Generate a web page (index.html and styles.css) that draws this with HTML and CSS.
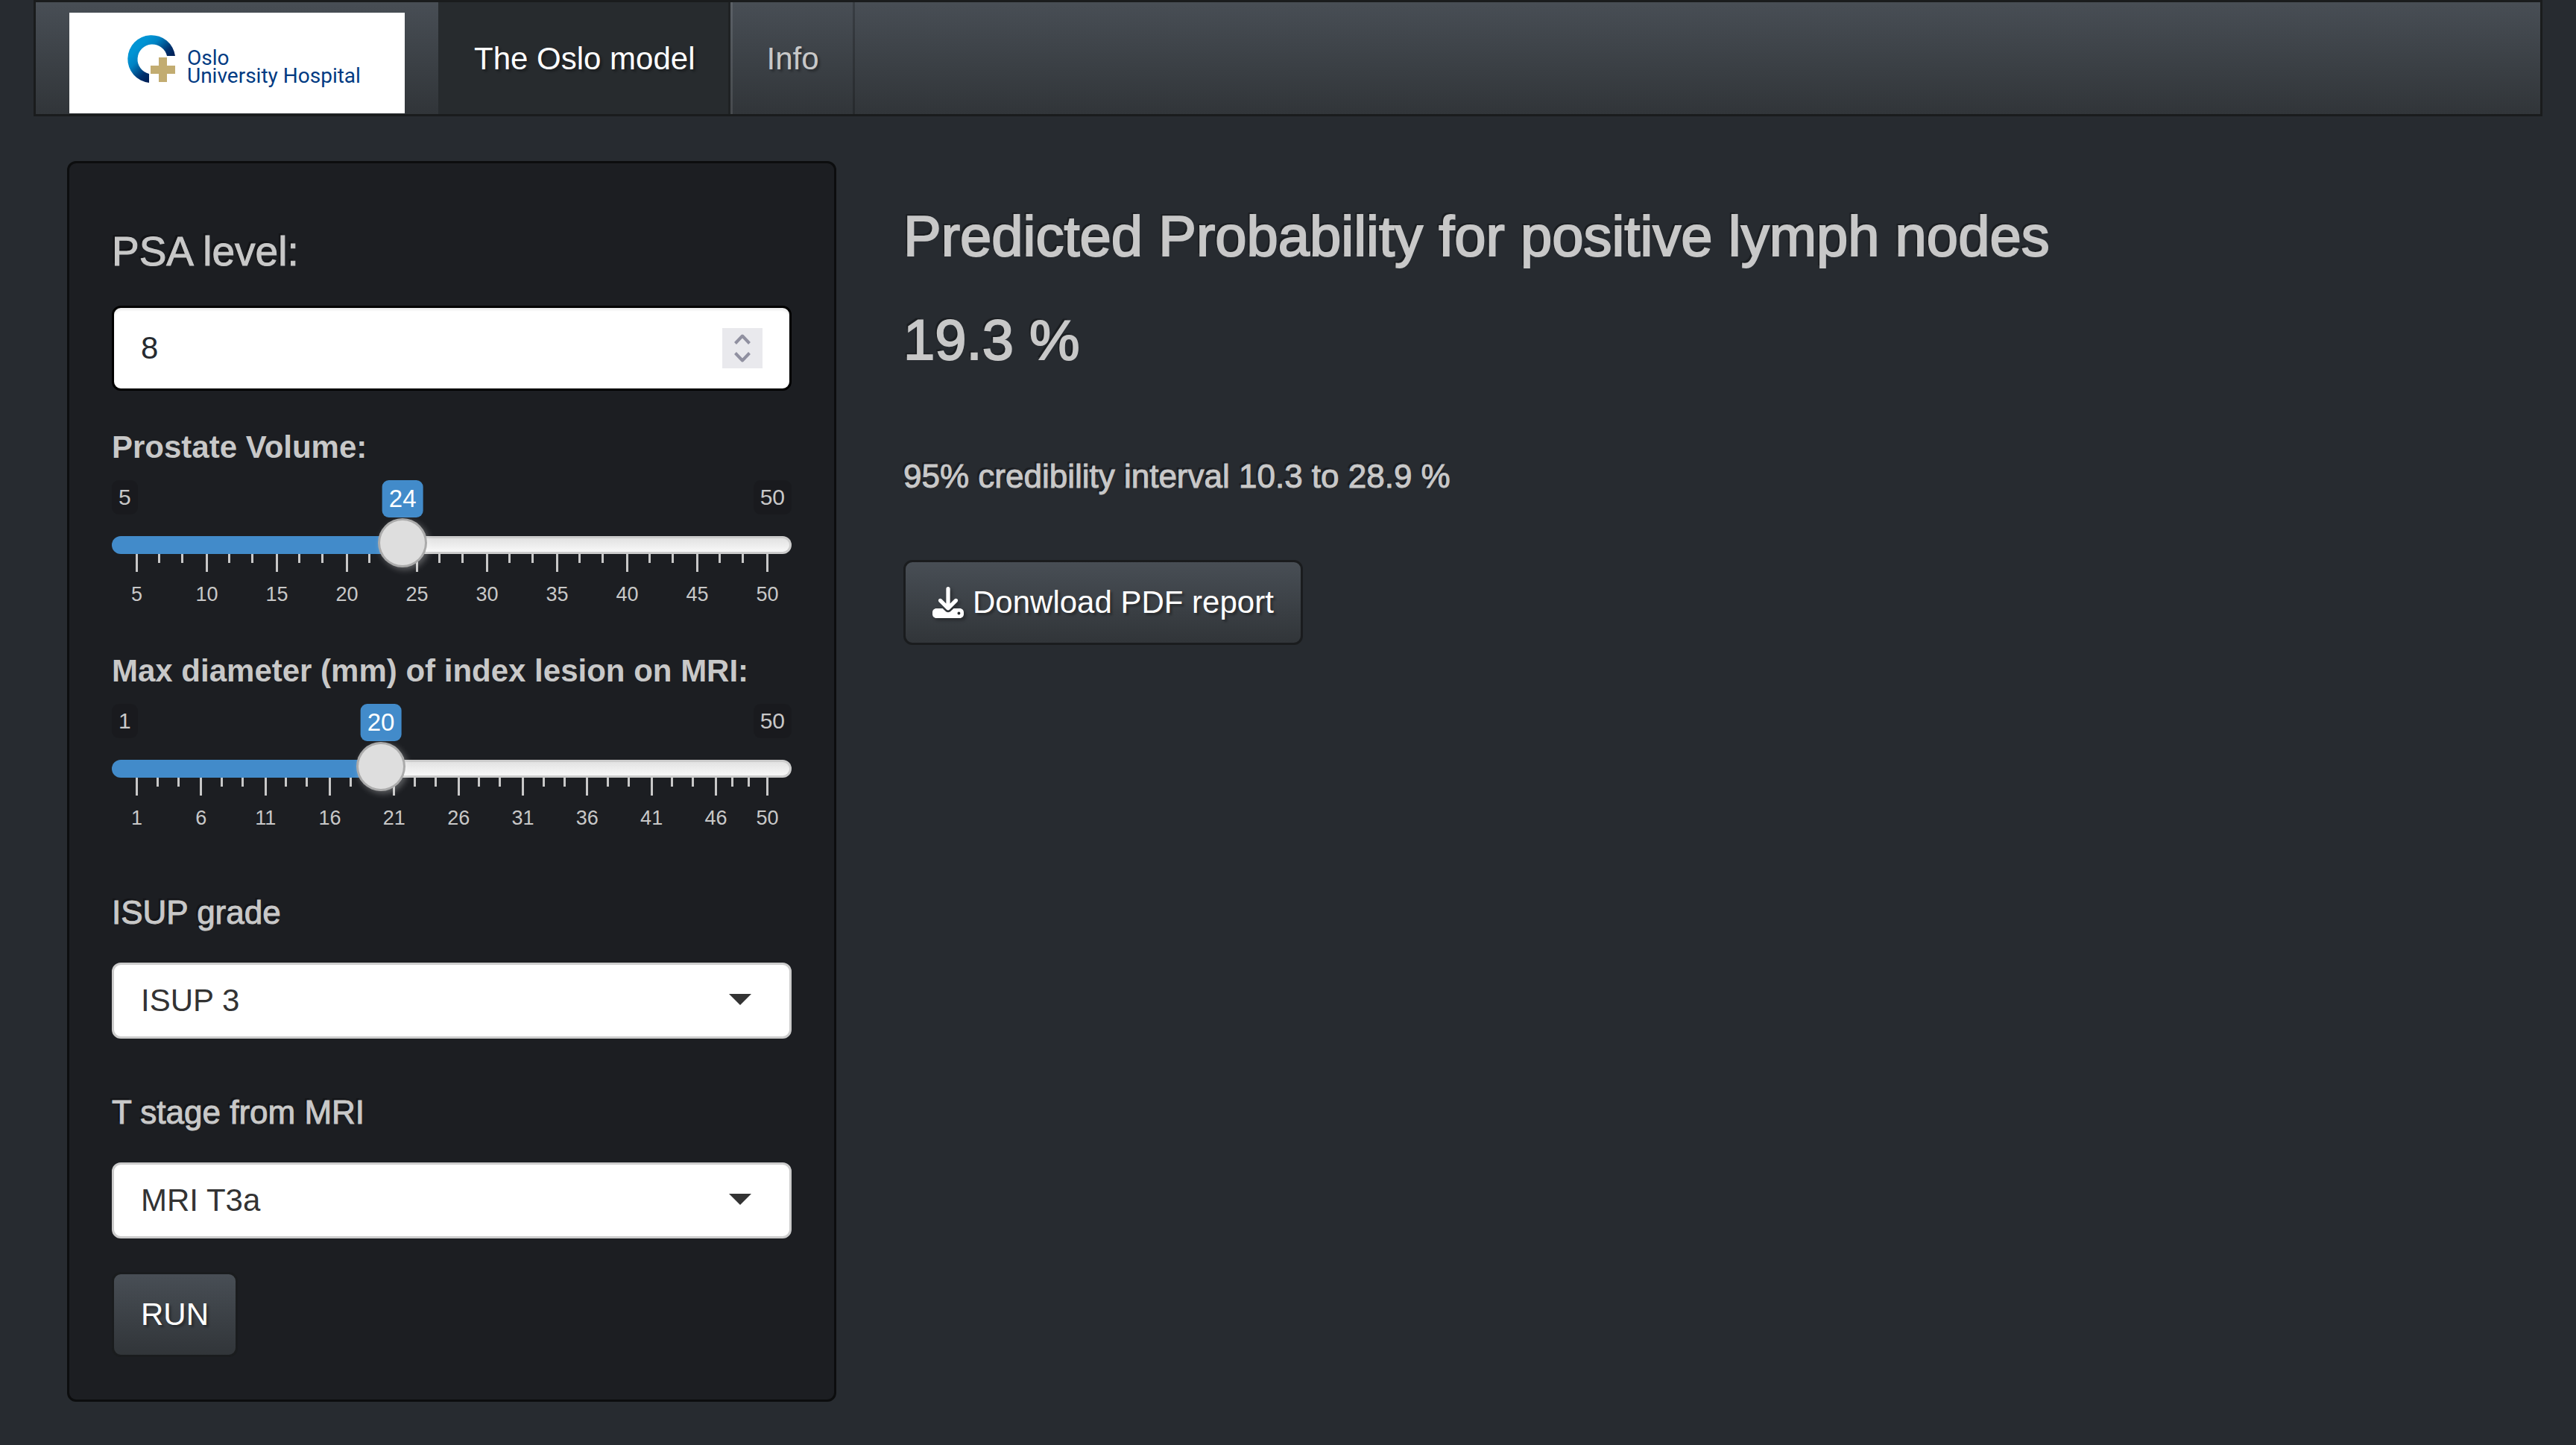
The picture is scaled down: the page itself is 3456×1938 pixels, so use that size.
FILE: index.html
```html
<!DOCTYPE html>
<html lang="en">
<head>
<meta charset="utf-8">
<title>The Oslo model</title>
<link rel="stylesheet" href="styles.css">
</head>
<body>
<header class="navbar">
  <a class="brand" href="#" aria-label="Oslo University Hospital">
    <svg class="brand-logo" viewBox="0 0 450 135">
      <defs>
        <linearGradient id="ring" gradientUnits="userSpaceOnUse" x1="94" y1="45" x2="127" y2="78">
          <stop offset="0" stop-color="#0094d4"/>
          <stop offset=".25" stop-color="#0083c4"/>
          <stop offset=".65" stop-color="#00326f"/>
          <stop offset="1" stop-color="#00164a"/>
        </linearGradient>
      </defs>
      <path fill="url(#ring)" d="M107 94A32 32 0 1 1 142 58H131A20 20 0 1 0 107 82Z"/>
      <path fill="#c2ac71" d="M120 60h11v11h11v11h-11v11h-11v-11h-11v-11h11z"/>
      <text class="brand-text" x="158" y="70">Oslo</text>
      <text class="brand-text" x="158" y="94">University Hospital</text>
    </svg>
  </a>
  <nav class="tabs">
    <a class="tab tab-active" href="#model">The Oslo model</a>
    <a class="tab" href="#info">Info</a>
  </nav>
</header>

<main class="layout">
  <form class="sidebar">
    <label class="title title-medium" for="psa">PSA level:</label>
    <div class="control control-number">
      <input class="field number" id="psa" type="number" value="8">
      <svg class="spinner" viewBox="0 0 54 54" aria-hidden="true">
        <path d="M17.500 20.500 27 10.500l9.500 10M17.500 33.500 27 43.500l9.500-10"/>
      </svg>
    </div>

    <div class="slider">
      <label class="slider-label" for="volume">Prostate Volume:</label>
      <div class="readout" style="--at: 0.4222">
        <span class="limit">5</span>
        <output class="current" for="volume">24</output>
        <span class="limit">50</span>
      </div>
      <input class="range" id="volume" type="range" min="5" max="50" value="24" style="--at: 0.4222">
      <ol class="scale">
        <li><span>5</span></li><li><span>10</span></li><li><span>15</span></li>
        <li><span>20</span></li><li><span>25</span></li><li><span>30</span></li>
        <li><span>35</span></li><li><span>40</span></li><li><span>45</span></li>
        <li class="last"><span>50</span></li>
      </ol>
    </div>

    <div class="slider">
      <label class="slider-label" for="diameter">Max diameter (mm) of index lesion on MRI:</label>
      <div class="readout" style="--at: 0.3878">
        <span class="limit">1</span>
        <output class="current" for="diameter">20</output>
        <span class="limit">50</span>
      </div>
      <input class="range" id="diameter" type="range" min="1" max="50" value="20" style="--at: 0.3878">
      <ol class="scale">
        <li><span>1</span></li><li><span>6</span></li><li><span>11</span></li>
        <li><span>16</span></li><li><span>21</span></li><li><span>26</span></li>
        <li><span>31</span></li><li><span>36</span></li><li><span>41</span></li>
        <li class="short"><span>46</span></li>
        <li class="last"><span>50</span></li>
      </ol>
    </div>

    <label class="title title-small" for="isup">ISUP grade</label>
    <div class="control control-select">
      <select class="field select" id="isup">
        <option>ISUP 1</option><option>ISUP 2</option><option selected>ISUP 3</option>
        <option>ISUP 4</option><option>ISUP 5</option>
      </select>
    </div>

    <label class="title title-small title-second" for="stage">T stage from MRI</label>
    <div class="control control-select">
      <select class="field select" id="stage">
        <option>MRI T2</option><option selected>MRI T3a</option><option>MRI T3b</option>
      </select>
    </div>

    <button class="button run" type="button">RUN</button>
  </form>

  <section class="results">
    <h1 class="title title-large">Predicted Probability for positive lymph nodes</h1>
    <p class="title title-large">19.3 %</p>
    <p class="title title-small interval">95% credibility interval 10.3 to 28.9 %</p>
    <button class="button" type="button">
      <svg class="icon" viewBox="0 0 512 512" aria-hidden="true"><path d="M288 32c0-17.700-14.300-32-32-32s-32 14.300-32 32V274.700l-73.400-73.400c-12.500-12.500-32.800-12.500-45.300 0s-12.500 32.800 0 45.300l128 128c12.500 12.500 32.800 12.500 45.300 0l128-128c12.500-12.500 12.500-32.800 0-45.300s-32.800-12.500-45.300 0L288 274.700V32zM64 352c-35.300 0-64 28.700-64 64v32c0 35.300 28.700 64 64 64H448c35.300 0 64-28.700 64-64V416c0-35.300-28.700-64-64-64H346.500l-45.300 45.300c-25 25-65.500 25-90.500 0L165.500 352H64zm368 56a24 24 0 1 1 0 48 24 24 0 1 1 0-48z"/></svg>
      Donwload PDF report
    </button>
  </section>
</main>
</body>
</html>
```
FILE: styles.css
```css
* {
  box-sizing: border-box;
}

body {
  margin: 0;
  padding: 0 45px;
  background: #272b30;
  color: #c8c8c8;
  font: 42px/60px "Helvetica Neue", "Liberation Sans", Arial, sans-serif;
}

/* Navigation bar */
.navbar {
  display: flex;
  height: 156px;
  border: 3px solid #1a1c1d;
  background: linear-gradient(#484e55, #3a3f44 60%, #313539);
}

.brand {
  padding: 14px 45px 0;
}

.brand-logo {
  display: block;
  width: 450px;
  height: 135px;
  background: #fff;
}

.brand-text {
  fill: #003a82;
  font: 28px Roboto, sans-serif;
}

.tabs {
  display: flex;
}

.tab {
  padding: 46px 45px 0;
  border-left: 3px solid rgba(255, 255, 255, 0.1);
  border-right: 3px solid rgba(0, 0, 0, 0.2);
  color: #c8c8c8;
  text-decoration: none;
  text-shadow: 3px 3px 3px rgba(0, 0, 0, 0.3);
}

.tab-active {
  border-left-color: transparent;
  background: #272b2e;
  color: #fff;
}

/* Page columns */
.layout {
  display: grid;
  grid-template-columns: 1fr 2fr;
  padding: 60px 0;
}

.sidebar {
  display: flex;
  flex-direction: column;
  margin: 0 45px;
  padding: 57px;
  border: 3px solid #0c0d0e;
  border-radius: 12px;
  background: #1c1e22;
}

.results {
  padding: 1px 45px 0;
}

/* Headings */
.title {
  margin: 0;
  font-weight: 500;
  text-shadow: -3px -3px 0 rgba(0, 0, 0, 0.3);
  -webkit-text-stroke: 1px currentColor;
}

.title-large {
  padding-top: 60px;
  font-size: 76px;
  line-height: 79px;
  -webkit-text-stroke-width: 2px;
}

.title-medium {
  padding: 31px 0 43px;
  font-size: 55px;
}

.title-small {
  padding: 82px 0 37px;
  font-size: 44px;
}

.title-second {
  padding-top: 69px;
}

.interval {
  padding: 114px 0 82px;
}

/* Form fields */
.control {
  position: relative;
}

.field {
  display: block;
  width: 100%;
  border-radius: 12px;
  background: #fff;
  font: inherit;
  appearance: none;
}

.number {
  height: 114px;
  padding: 0 36px;
  border: 3px solid #000;
  box-shadow: inset 0 3px 3px rgba(0, 0, 0, 0.08);
  color: #272b30;
  appearance: textfield;
}

.number::-webkit-inner-spin-button {
  appearance: none;
}

.spinner {
  position: absolute;
  top: 30px;
  right: 39px;
  width: 54px;
  height: 54px;
  background: #e9e9ed;
  fill: none;
  stroke: #9090a0;
  stroke-width: 4;
  stroke-linejoin: round;
  pointer-events: none;
}

.select {
  height: 102px;
  padding: 0 36px;
  border: 3px solid #ccc;
  color: #333;
}

.control-select::after {
  content: "";
  position: absolute;
  top: 42px;
  right: 54px;
  width: 30px;
  height: 15px;
  background: #333;
  clip-path: polygon(0 0, 100% 0, 50% 100%);
  pointer-events: none;
}

/* Sliders */
.slider {
  padding-top: 46px;
}

.slider + .slider {
  padding-top: 58px;
}

.slider-label {
  display: block;
  padding-bottom: 14px;
  font-weight: 700;
}

.readout {
  position: relative;
  display: flex;
  justify-content: space-between;
  height: 54px;
}

.limit {
  height: 46px;
  padding: 0 9px;
  border-radius: 9px;
  background: rgba(0, 0, 0, 0.1);
  font-size: 30px;
  line-height: 46px;
}

.current {
  position: absolute;
  left: calc(33px + (100% - 66px) * var(--at));
  height: 50px;
  padding: 0 9px;
  border-radius: 9px;
  background: #428bca;
  color: #fff;
  font-size: 33px;
  line-height: 50px;
  transform: translateX(-50%);
}

.range {
  position: relative;
  z-index: 1;
  display: block;
  width: 100%;
  height: 66px;
  margin: 0;
  background: none;
  appearance: none;
}

.range::-webkit-slider-runnable-track {
  box-sizing: border-box;
  height: 24px;
  border: 3px solid transparent;
  border-radius: 12px;
  background:
    linear-gradient(#428bca, #428bca) 0 0 / calc(33px + (100% - 66px) * var(--at)) 100% no-repeat border-box,
    linear-gradient(#e2e2e2, #f8f8f8) padding-box,
    linear-gradient(#ccc, #ccc) border-box;
}

.range::-webkit-slider-thumb {
  width: 60px;
  height: 60px;
  margin-top: -24px;
  border: 0;
  border-radius: 50%;
  background: #dedede;
  box-shadow: 0 0 0 3px #ababab, 3px 3px 9px 3px rgba(255, 255, 255, 0.3);
  appearance: none;
}

.scale {
  display: flex;
  margin: -21px 34px 0 32px;
  padding: 0;
  list-style: none;
  font-size: 27px;
  line-height: 30px;
}

.scale li {
  flex: 5 1 0;
  min-width: 0;
  padding-top: 39px;
  background:
    linear-gradient(#c8c8c8, #c8c8c8) 0 0 / 3px 24px no-repeat,
    linear-gradient(#c8c8c8, #c8c8c8) 33.333% 0 / 3px 12px no-repeat,
    linear-gradient(#c8c8c8, #c8c8c8) 66.667% 0 / 3px 12px no-repeat;
}

.scale .short {
  flex-grow: 4;
}

.scale .last {
  flex: 0 0 3px;
  margin-right: -3px;
  background: linear-gradient(#c8c8c8, #c8c8c8) 0 0 / 3px 24px no-repeat;
}

.scale span {
  display: flex;
  justify-content: center;
  width: 3px;
}

/* Buttons */
.button {
  display: flex;
  align-items: center;
  gap: 12px;
  height: 114px;
  padding: 0 36px;
  border: 3px solid #1a1c1e;
  border-radius: 12px;
  background: linear-gradient(#484e55, #3a3f44 60%, #313539);
  color: #fff;
  font: inherit;
  text-shadow: 3px 3px 3px rgba(0, 0, 0, 0.3);
}

.run {
  align-self: flex-start;
  margin-top: 45px;
}

.icon {
  width: 42px;
  height: 42px;
  fill: currentColor;
  filter: drop-shadow(3px 3px 2px rgba(0, 0, 0, 0.3));
}
```
